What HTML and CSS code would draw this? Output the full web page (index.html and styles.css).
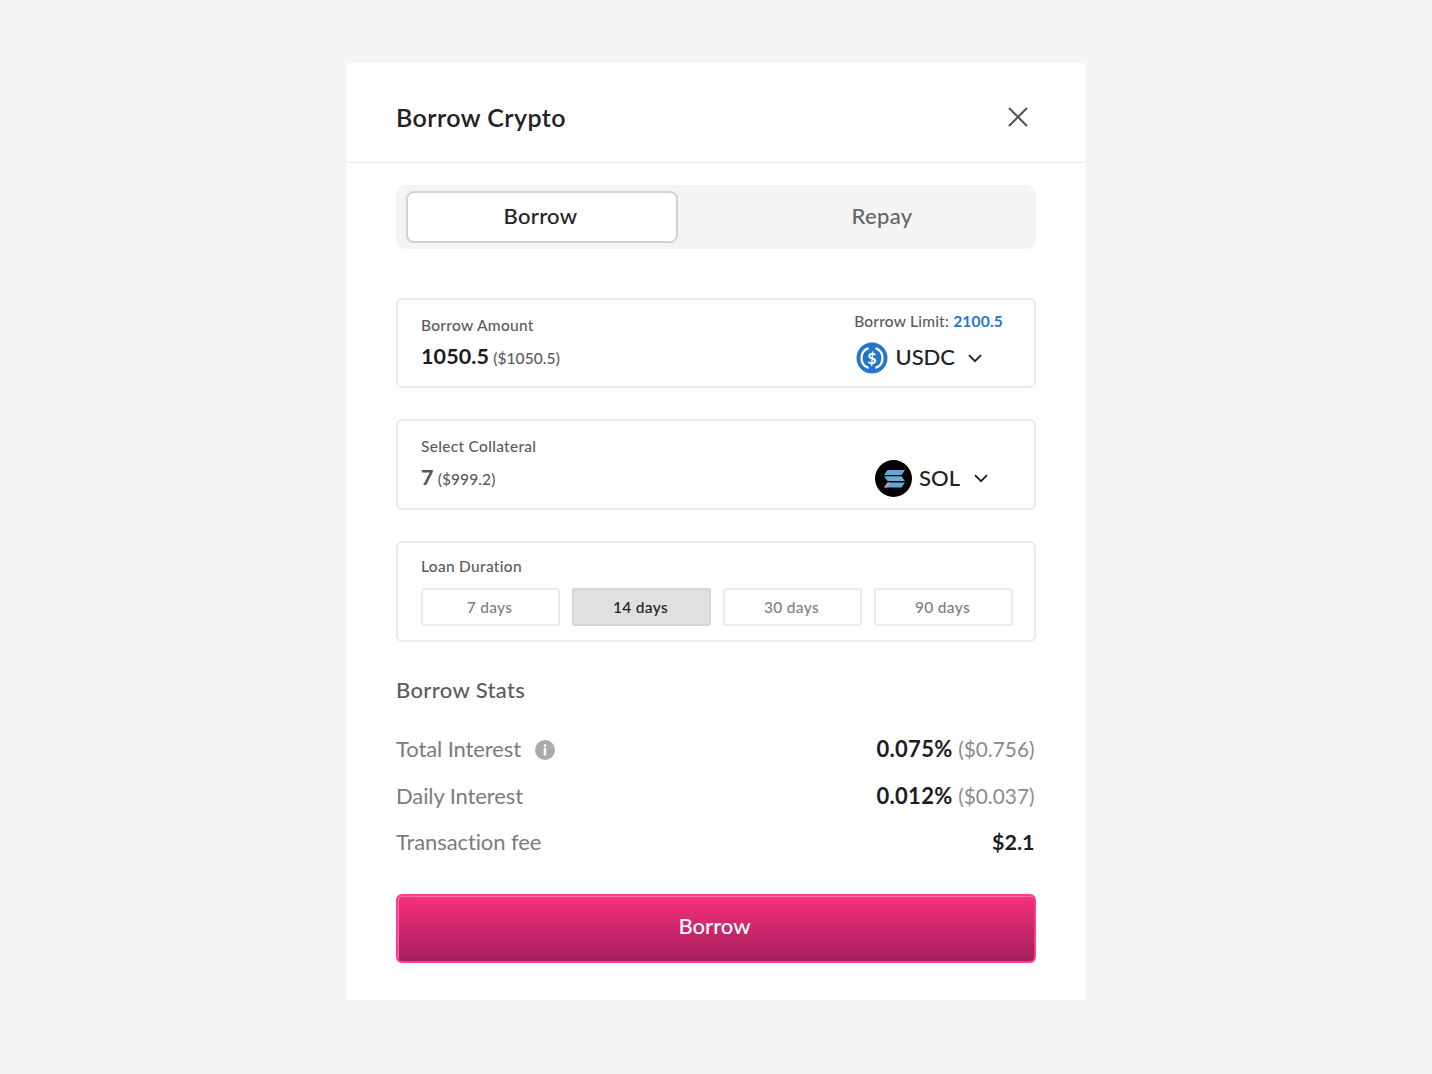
FILE: index.html
```html
<!DOCTYPE html>
<html lang="en">
<head>
<meta charset="utf-8">
<title>Borrow Crypto</title>
<link rel="stylesheet" href="styles.css">
</head>
<body>
<main class="modal">
  <header class="modal-head">
    <h1 class="modal-title">Borrow Crypto</h1>
    <svg class="close" width="24" height="24" viewBox="0 0 24 24"><path d="M3 3 L21 21 M21 3 L3 21" stroke="#555" stroke-width="2" fill="none"/></svg>
  </header>
  <div class="modal-body">
    <div class="tabs">
      <div class="tab tab-active">Borrow</div>
      <div class="tab">Repay</div>
    </div>

    <section class="card card-amount">
      <div class="col">
        <div class="label">Borrow Amount</div>
        <div class="value"><strong class="num">1050.5</strong> <span class="usd">($1050.5)</span></div>
      </div>
      <div class="col col-right">
        <div class="label limit">Borrow Limit: <b class="limit-val">2100.5</b></div>
        <div class="token token-usdc">
          <svg class="token-icon" width="32" height="32" viewBox="0 0 32 32">
            <circle cx="16" cy="16" r="15.5" fill="#2775ca"/>
            <path d="M12.5 6.1 A10.5 10.5 0 0 0 12.5 25.9 M19.5 6.1 A10.5 10.5 0 0 1 19.5 25.9" stroke="#fff" stroke-width="2.2" fill="none"/>
            <text class="usdc-s" x="16" y="21.6" text-anchor="middle">$</text>
          </svg>
          <span class="token-name">USDC</span>
          <svg class="chev" width="14" height="9" viewBox="0 0 14 9"><path d="M1 1.2 L7 7.2 L13 1.2" stroke="#1d1d1f" stroke-width="1.8" fill="none"/></svg>
        </div>
      </div>
    </section>

    <section class="card card-collateral">
      <div class="col">
        <div class="label">Select Collateral</div>
        <div class="value"><strong class="num num-muted">7</strong> <span class="usd">($999.2)</span></div>
      </div>
      <div class="token token-sol">
        <svg class="token-icon" width="37" height="37" viewBox="0 0 37 37">
          <circle cx="18.5" cy="18.5" r="18.5" fill="#000"/>
          <path d="M12.5 10 H30 L26.5 15 H9 Z" fill="#5da9d9"/>
          <path d="M9 16.2 H26.5 L30 21 H12.5 Z" fill="#6fa8cf"/>
          <path d="M12.5 22.6 H30 L26.5 27.6 H9 Z" fill="#5da9d9"/>
          <path d="M12.5 22.6 H15 L12 27.6 H9 Z" fill="#d98fb4"/>
        </svg>
        <span class="token-name">SOL</span>
        <svg class="chev" width="14" height="9" viewBox="0 0 14 9"><path d="M1 1.2 L7 7.2 L13 1.2" stroke="#1d1d1f" stroke-width="1.8" fill="none"/></svg>
      </div>
    </section>

    <section class="card card-duration">
      <div class="label">Loan Duration</div>
      <div class="durations">
        <div class="dur">7 days</div>
        <div class="dur dur-active">14 days</div>
        <div class="dur">30 days</div>
        <div class="dur">90 days</div>
      </div>
    </section>

    <h2 class="stats-title">Borrow Stats</h2>
    <div class="stats">
      <div class="row">
        <div class="row-label">Total Interest
          <svg class="info" width="20" height="20" viewBox="0 0 20 20">
            <circle cx="10" cy="10" r="10" fill="#aaa"/>
            <circle cx="10" cy="5.6" r="1.4" fill="#fff"/>
            <rect x="8.8" y="8" width="2.4" height="7.4" fill="#fff"/>
          </svg>
        </div>
        <div class="row-value"><b class="strong">0.075%</b> <span class="paren">($0.756)</span></div>
      </div>
      <div class="row">
        <div class="row-label">Daily Interest</div>
        <div class="row-value"><b class="strong">0.012%</b> <span class="paren">($0.037)</span></div>
      </div>
      <div class="row">
        <div class="row-label">Transaction fee</div>
        <div class="row-value"><b class="strong fee">$2.1</b></div>
      </div>
    </div>
    <button class="cta" type="button">Borrow</button>
  </div>
</main>
</body>
</html>
```
FILE: styles.css
```css
* { box-sizing: border-box; }
html, body { margin: 0; height: 100%; }
body {
  background: #f5f5f5;
  font-family: "Lato", "Open Sans", sans-serif;
  color: #1d1d1f;
  padding-top: 63px;
  height: 1074px;
  overflow: hidden;
}
.modal {
  width: 738px;
  height: 937px;
  margin: 0 auto;
  background: #fff;
}
.modal-head {
  height: 100px;
  padding: 8px 56px 0 49px;
  border-bottom: 1px solid #ececec;
  display: flex;
  align-items: center;
  justify-content: space-between;
}
.modal-title { margin: 0; font-size: 25px; font-weight: 600; letter-spacing: 0.45px; color: #222; }
.close { display: block; margin-right: -1px; }
.modal-body { padding: 22px 49px 0; }
.tabs {
  height: 64px;
  border-radius: 10px;
  background: #f4f4f4;
  padding: 6px 18px 6px 10px;
  display: flex;
  justify-content: space-between;
}
.tab {
  width: 272px;
  display: flex;
  align-items: center;
  justify-content: center;
  padding-bottom: 3px;
  font-size: 22px;
  font-weight: 500;
  letter-spacing: 0.3px;
  color: #666;
}
.tab-active {
  padding-right: 3px;
  background: #fff;
  border: 2px solid #d2d2d2;
  border-radius: 8px;
  color: #222;
}
.card {
  border: 2px solid #e8ebf5;
  border-radius: 6px;
  padding: 0 22px 0 23px;
  margin-top: 31px;
}
.card-amount {
  height: 90px;
  margin-top: 49px;
  display: flex;
  justify-content: space-between;
}
.card-collateral {
  height: 91px;
  display: flex;
  justify-content: space-between;
}
.card-duration { height: 101px; padding-top: 13px; }
.col { padding-top: 15px; }
.col-right { padding-top: 11px; padding-right: 9px; display: flex; flex-direction: column; align-items: flex-end; }
.label { font-size: 15.5px; font-weight: 500; line-height: 20px; letter-spacing: 0.3px; color: #5c5c5c; }
.limit { letter-spacing: 0.2px; }
.limit-val { color: #2775ca; font-weight: 700; }
.value { margin-top: 8px; line-height: 26px; font-size: 15.5px; letter-spacing: 0.1px; }
.num { font-size: 21.5px; font-weight: 700; color: #1d1d1f; }
.num-muted { color: #555; }
.usd { color: #5c5c5c; font-weight: 500; }
.token { display: flex; align-items: center; }
.token-name { font-size: 22px; font-weight: 500; color: #222; padding-bottom: 2px; }
.token-usdc { margin-top: 11px; padding-right: 21px; }
.token-usdc .token-name { padding-bottom: 4px; }
.token-usdc .token-icon { margin-right: 7px; }
.token-usdc .chev { margin-left: 13px; }
.usdc-s { font-family: "Lato", sans-serif; font-size: 16px; font-weight: 700; fill: #fff; }
.token-sol { padding: 39px 24px 0 0; align-self: flex-start; }
.token-sol .token-icon { margin-right: 7px; }
.token-sol .chev { margin-left: 14px; }
.durations { display: grid; grid-template-columns: repeat(4, 139px); column-gap: 12px; margin-top: 12px; }
.dur {
  height: 38px;
  padding: 0 2px 1px 0;
  border: 2px solid #e8ebf5;
  border-radius: 3px;
  display: flex;
  align-items: center;
  justify-content: center;
  font-size: 15.5px;
  font-weight: 500;
  letter-spacing: 0.3px;
  color: #808080;
}
.dur-active { background: #e0e0e0; border-color: #d4d4d4; color: #222; }
.stats-title { margin: 34px 0 0; font-size: 22px; line-height: 28px; font-weight: 500; letter-spacing: 0.35px; color: #5c5c5c; }
.stats { margin-top: 21.25px; }
.row { display: flex; justify-content: space-between; align-items: center; height: 46.5px; padding-right: 1.5px; font-size: 22px; }
.row-label { display: flex; align-items: center; gap: 14px; color: #7c7c7c; font-weight: 400; letter-spacing: -0.1px; }
.info { margin-top: 3px; }
.row-value { color: #1d1d1f; }
.strong { font-weight: 700; letter-spacing: 0.3px; }
.fee { letter-spacing: 0; font-size: 21.5px; }
.paren { color: #8b8b8b; font-weight: 400; font-size: 20.8px; }
.cta {
  display: block;
  width: 100%;
  height: 69px;
  margin-top: 28.75px;
  border: 2px solid #ff3d8f;
  border-radius: 6px;
  background: linear-gradient(180deg, #f8307f 0%, #a31e59 100%);
  box-shadow: inset 1px 1px 0 #ff6fa9;
  color: #fff;
  font-family: inherit;
  font-size: 22px;
  font-weight: 500;
  padding: 0 3px 6px 0;
}
```
